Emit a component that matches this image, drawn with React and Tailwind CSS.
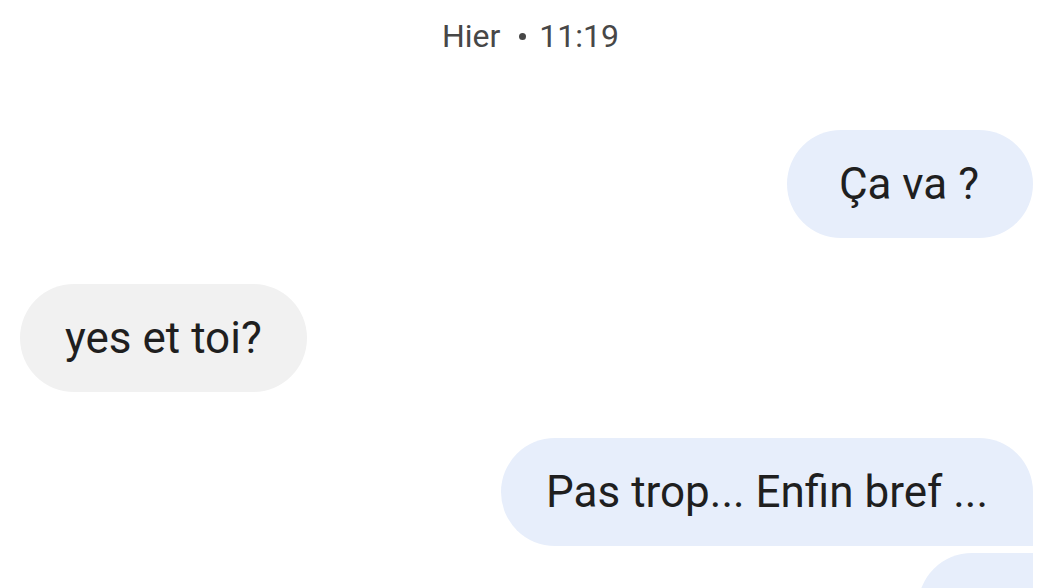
import React from "react";

const font = { fontFamily: "Roboto, 'Noto Sans', Arial, sans-serif" };

const Outgoing = ({ children, className = "" }) => (
  <div className="shrink-0 flex justify-end">
    <div
      className={
        "h-[108px] flex items-center bg-[#e7eefb] text-[#1f1f1f] text-[44px] leading-none whitespace-nowrap " +
        className
      }
    >
      {children}
    </div>
  </div>
);

export default function App() {
  return (
    <div
      className="w-[1057px] h-[588px] overflow-hidden bg-white flex flex-col pr-6 pl-5"
      style={font}
    >
      <div className="shrink-0 h-[72px] flex items-center justify-center gap-[19px] text-[32px] leading-none text-[#474747] pl-[8px]">
        <span>Hier</span>
        <span className="flex items-center gap-[13px]">
          <span className="w-[7px] h-[7px] rounded-full bg-[#474747]" />
          <span>11:19</span>
        </span>
      </div>

      <div className="shrink-0 mt-[58px] flex flex-col">
        <Outgoing className="rounded-full pl-[52px] pr-[54px]">Ça va ?</Outgoing>

        <div className="shrink-0 mt-[46px] flex justify-start">
          <div className="h-[108px] flex items-center bg-[#f1f1f1] text-[#1f1f1f] text-[44px] leading-none rounded-full px-[45px] whitespace-nowrap">
            yes et toi?
          </div>
        </div>

        <Outgoing className="mt-[46px] rounded-l-full rounded-tr-full rounded-br-[6px] px-[45px]">
          Pas trop... Enfin bref ...
        </Outgoing>

        <div className="shrink-0 mt-[7px] flex justify-end">
          <div className="h-[108px] w-[115px] bg-[#e7eefb] rounded-l-full rounded-br-full rounded-tr-[6px]" />
        </div>
      </div>
    </div>
  );
}
